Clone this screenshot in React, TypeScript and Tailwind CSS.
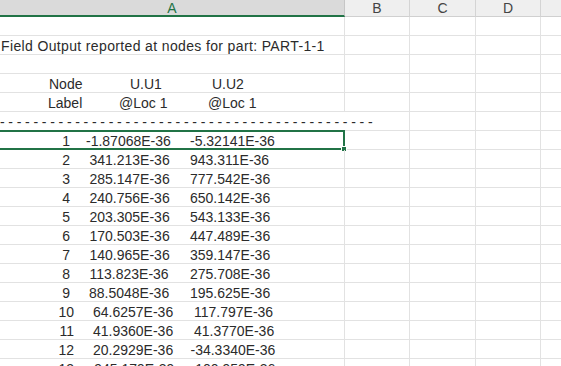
import React from "react";

type DataRow = { n: string; a: string; b: string; p: [number, number, number] };

// [end of node label, start of U1, start of U2] in px from the cell's left edge
const dataRows: DataRow[] = [
  { n: "1", a: "-1.87068E-36", b: "-5.32141E-36", p: [70, 86, 190] },
  { n: "2", a: "341.213E-36", b: "943.311E-36", p: [70, 89.5, 190] },
  { n: "3", a: "285.147E-36", b: "777.542E-36", p: [70, 89.5, 190] },
  { n: "4", a: "240.756E-36", b: "650.142E-36", p: [70, 89.5, 190] },
  { n: "5", a: "203.305E-36", b: "543.133E-36", p: [70, 89.5, 190] },
  { n: "6", a: "170.503E-36", b: "447.489E-36", p: [70, 89.5, 190] },
  { n: "7", a: "140.965E-36", b: "359.147E-36", p: [70, 89.5, 190] },
  { n: "8", a: "113.823E-36", b: "275.708E-36", p: [70, 89.5, 190] },
  { n: "9", a: "88.5048E-36", b: "195.625E-36", p: [70, 89, 190] },
  { n: "10", a: "64.6257E-36", b: "117.797E-36", p: [74, 93, 194] },
  { n: "11", a: "41.9360E-36", b: "41.3770E-36", p: [74, 93, 194] },
  { n: "12", a: "20.2929E-36", b: "-34.3340E-36", p: [74, 93, 190.5] },
  { n: "13", a: "-945.179E-39", b: "-100.959E-36", p: [74, 89.5, 190.5] },
];

const Cell: React.FC<{ w: string; last?: boolean }> = ({ w, last }) => (
  <div className={`${w} shrink-0 h-full ${last ? "" : "border-r border-[#e2e2e2]"}`} />
);

const Row: React.FC<{ children?: React.ReactNode; spill?: boolean; selected?: boolean }> = ({
  children,
  spill,
  selected,
}) => (
  <div className="flex h-[19px] border-b border-[#e2e2e2]">
    <div
      className={`relative w-[345px] shrink-0 h-full whitespace-nowrap pt-[1px] leading-[18px] ${
        spill ? "z-10" : "border-r border-[#e2e2e2]"
      }`}
    >
      {children}
      {selected && (
        <div className="absolute -top-[1px] -bottom-[1px] -left-[4px] -right-[1px] border-2 border-[#217346]">
          <div className="absolute -right-[4px] -bottom-[4px] w-[6px] h-[6px] bg-[#217346] border border-white" />
        </div>
      )}
    </div>
    <Cell w="w-[65px]" />
    <Cell w="w-[66px]" />
    <Cell w="w-[65px]" />
    <div className="flex-1" />
  </div>
);

export default function App() {
  return (
    <div className="w-[561px] h-[366px] overflow-hidden bg-white font-['Liberation_Sans',Arial,sans-serif] text-[14px] text-[#2b2b2b]">
      {/* column headers */}
      <div className="flex h-[17px] leading-[17px] text-[14px]">
        <div className="w-[345px] shrink-0 bg-[#dadada] border-b-2 border-[#217346] border-r border-r-[#c6c6c6] text-center text-[#217346]">
          A
        </div>
        <div className="w-[65px] shrink-0 bg-[#efefef] border-b border-[#d0d0d0] border-r border-r-[#d4d4d4] text-center text-[#444]">
          B
        </div>
        <div className="w-[66px] shrink-0 bg-[#efefef] border-b border-[#d0d0d0] border-r border-r-[#d4d4d4] text-center text-[#444]">
          C
        </div>
        <div className="w-[65px] shrink-0 bg-[#efefef] border-b border-[#d0d0d0] border-r border-r-[#d4d4d4] text-center text-[#444]">
          D
        </div>
        <div className="flex-1 bg-[#efefef] border-b border-[#d0d0d0]" />
      </div>

      <Row />
      <Row>
        <span className="pl-[1px] tracking-[0.36px]">Field Output reported at nodes for part: PART-1-1</span>
      </Row>
      <Row />
      <Row>
        <div className="flex">
          <span className="ml-[49px] w-[81px] shrink-0">Node</span>
          <span className="w-[82px] shrink-0">U.U1</span>
          <span>U.U2</span>
        </div>
      </Row>
      <Row>
        <div className="flex">
          <span className="ml-[48px] w-[71px] shrink-0">Label</span>
          <span className="w-[89px] shrink-0">@Loc 1</span>
          <span>@Loc 1</span>
        </div>
      </Row>
      <Row spill>
        <span className="tracking-[3.7px]">{"-".repeat(45)}</span>
      </Row>
      {dataRows.map((r, i) => (
        <Row key={r.n} selected={i === 0}>
          <div className="flex">
            <span className="shrink-0 text-right" style={{ width: r.p[0] }}>
              {r.n}
            </span>
            <span className="shrink-0" style={{ marginLeft: r.p[1] - r.p[0], width: r.p[2] - r.p[1] }}>
              {r.a}
            </span>
            <span>{r.b}</span>
          </div>
        </Row>
      ))}
    </div>
  );
}
